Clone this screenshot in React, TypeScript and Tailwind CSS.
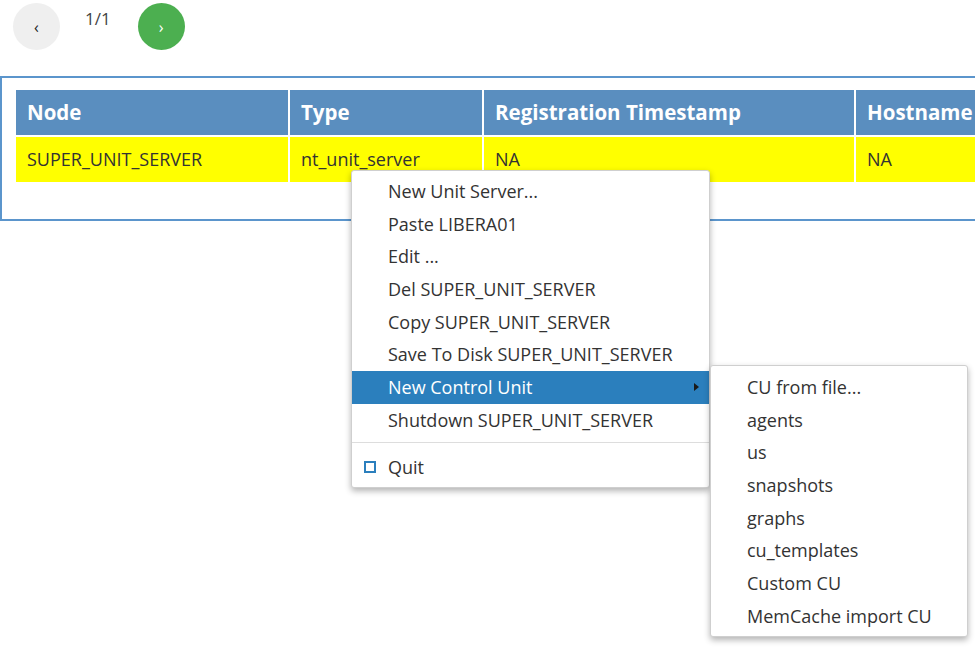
import React from "react";

const menuItems = [
    "New Unit Server...",
    "Paste LIBERA01",
    "Edit ...",
    "Del SUPER_UNIT_SERVER",
    "Copy SUPER_UNIT_SERVER",
    "Save To Disk SUPER_UNIT_SERVER",
    "New Control Unit",
    "Shutdown SUPER_UNIT_SERVER",
];

const subItems = [
    "CU from file...",
    "agents",
    "us",
    "snapshots",
    "graphs",
    "cu_templates",
    "Custom CU",
    "MemCache import CU",
];

const App = () => {
    return (
        <div className="relative w-[975px] h-[663px] overflow-hidden bg-white font-['Open_Sans',sans-serif] text-[#333333]">
            {/* Pager */}
            <div className="flex items-start pt-[3px] pl-[13px]">
                <button className="w-[47px] h-[47px] rounded-full bg-[#efefef] flex items-center justify-center text-[16px] text-[#222] leading-none">
                    ‹
                </button>
                <span className="ml-[25px] mt-[3px] text-[17px] text-[#444]">1/1</span>
                <button className="ml-[27px] w-[47px] h-[47px] rounded-full bg-[#4caf50] flex items-center justify-center text-[16px] text-white leading-none">
                    ›
                </button>
            </div>

            {/* Table box */}
            <div className="mt-[26px] w-[1100px] border-2 border-[#5b95cc] pl-[14px] pt-[12px] pb-[37px]">
                <table className="border-collapse text-left">
                    <thead>
                        <tr className="bg-[#5a8ebf] text-white text-[20.5px] font-bold">
                            <th className="w-[273px] h-[46px] px-[11px] border-r-2 border-white">Node</th>
                            <th className="w-[194px] h-[46px] px-[11px] border-r-2 border-white">Type</th>
                            <th className="w-[372px] h-[46px] px-[11px] border-r-2 border-white">Registration Timestamp</th>
                            <th className="w-[200px] h-[46px] px-[11px]">Hostname</th>
                        </tr>
                    </thead>
                    <tbody>
                        <tr className="bg-[#ffff00] text-[18px] text-[#333]">
                            <td className="h-[46px] px-[11px] border-r-2 border-t-2 border-white">SUPER_UNIT_SERVER</td>
                            <td className="h-[46px] px-[11px] border-r-2 border-t-2 border-white">nt_unit_server</td>
                            <td className="h-[46px] px-[11px] border-r-2 border-t-2 border-white">NA</td>
                            <td className="h-[46px] px-[11px] border-t-2 border-white">NA</td>
                        </tr>
                    </tbody>
                </table>
            </div>

            {/* Context menu */}
            <div className="absolute left-[351px] top-[170px] w-[359px] bg-white border border-[#cfcfcf] rounded-[3px] shadow-[0_3px_6px_rgba(0,0,0,0.3)] pt-[4px] pb-[3px] text-[18px]">
                {menuItems.map((label) =>
                    label === "New Control Unit" ? (
                        <div key={label} className="relative h-[32.7px] flex items-center pl-[36px] bg-[#2b7fbd] text-white">
                            {label}
                            <span className="absolute right-[10px] top-1/2 -translate-y-1/2 w-0 h-0 border-y-[4px] border-y-transparent border-l-[5px] border-l-[#1a1a1a]" />
                        </div>
                    ) : (
                        <div key={label} className="h-[32.7px] flex items-center pl-[36px]">
                            {label}
                        </div>
                    )
                )}
                <div className="mt-[5px] mb-[8px] h-px bg-[#dddddd]" />
                <div className="relative h-[33px] flex items-center pl-[36px]">
                    <span className="absolute left-[12px] top-1/2 -translate-y-1/2 w-[12px] h-[12px] border-2 border-[#2b7fbd]" />
                    Quit
                </div>
            </div>

            {/* Submenu */}
            <div className="absolute left-[710px] top-[365px] w-[258px] bg-white border border-[#cfcfcf] rounded-[3px] shadow-[0_3px_6px_rgba(0,0,0,0.3)] pt-[5px] pb-[3px] text-[18px]">
                {subItems.map((label) => (
                    <div key={label} className="h-[32.7px] flex items-center pl-[36px]">
                        {label}
                    </div>
                ))}
            </div>
        </div>
    );
};

export default App;
